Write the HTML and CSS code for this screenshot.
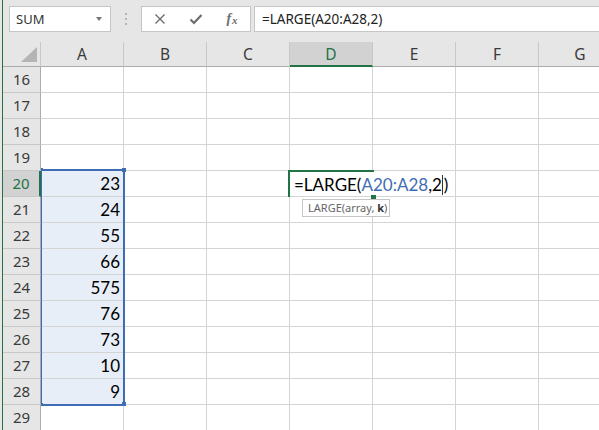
FILE: index.html
```html
<!DOCTYPE html>
<html>
<head>
<meta charset="utf-8">
<link rel="stylesheet" href="styles.css">
</head>
<body>
<div class="app">
  <div class="edge"></div>
  <div class="main">
    <div class="toolbar">
      <div class="namebox"><span>SUM</span><span class="caret"></span></div>
      <div class="dots"><svg width="4" height="14" viewBox="0 0 4 14"><rect x="1" y="1" width="2" height="2" fill="#b4b4b4"/><rect x="1" y="6" width="2" height="2" fill="#b4b4b4"/><rect x="1" y="11" width="2" height="2" fill="#b4b4b4"/></svg></div>
      <div class="fnbox">
        <span class="fbtn"><svg width="12" height="12" viewBox="0 0 12 12"><path d="M1.5 1.5 L10.5 10.5 M10.5 1.5 L1.5 10.5" stroke="#6d6d6d" stroke-width="1.4" fill="none"/></svg></span>
        <span class="fbtn"><svg width="14" height="12" viewBox="0 0 14 12"><path d="M1.5 6.5 L5 10 L12.5 2" stroke="#6d6d6d" stroke-width="2.2" fill="none"/></svg></span>
        <span class="fbtn fx"><i>f</i><i class="x">x</i></span>
      </div>
      <div class="formula">=LARGE(A20:A28,2)</div>
    </div>
    <div class="sheet">
      <div class="grid">
        <div class="corner"><svg width="37" height="24" viewBox="0 0 37 24"><polygon points="34,5 34,20 18,20" fill="#b4b4b4"/></svg></div>
        <div class="ch">A</div><div class="ch">B</div><div class="ch">C</div><div class="ch sel">D</div><div class="ch">E</div><div class="ch">F</div><div class="ch">G</div>

        <div class="rh">16</div><div class="c"></div><div class="c"></div><div class="c"></div><div class="c"></div><div class="c"></div><div class="c"></div><div class="c"></div>
        <div class="rh">17</div><div class="c"></div><div class="c"></div><div class="c"></div><div class="c"></div><div class="c"></div><div class="c"></div><div class="c"></div>
        <div class="rh">18</div><div class="c"></div><div class="c"></div><div class="c"></div><div class="c"></div><div class="c"></div><div class="c"></div><div class="c"></div>
        <div class="rh">19</div><div class="c"></div><div class="c"></div><div class="c"></div><div class="c"></div><div class="c"></div><div class="c"></div><div class="c"></div>
        <div class="rh sel">20</div><div class="c s">23</div><div class="c"></div><div class="c"></div><div class="c"></div><div class="c"></div><div class="c"></div><div class="c"></div>
        <div class="rh">21</div><div class="c s">24</div><div class="c"></div><div class="c"></div><div class="c"></div><div class="c"></div><div class="c"></div><div class="c"></div>
        <div class="rh">22</div><div class="c s">55</div><div class="c"></div><div class="c"></div><div class="c"></div><div class="c"></div><div class="c"></div><div class="c"></div>
        <div class="rh">23</div><div class="c s">66</div><div class="c"></div><div class="c"></div><div class="c"></div><div class="c"></div><div class="c"></div><div class="c"></div>
        <div class="rh">24</div><div class="c s">575</div><div class="c"></div><div class="c"></div><div class="c"></div><div class="c"></div><div class="c"></div><div class="c"></div>
        <div class="rh">25</div><div class="c s">76</div><div class="c"></div><div class="c"></div><div class="c"></div><div class="c"></div><div class="c"></div><div class="c"></div>
        <div class="rh">26</div><div class="c s">73</div><div class="c"></div><div class="c"></div><div class="c"></div><div class="c"></div><div class="c"></div><div class="c"></div>
        <div class="rh">27</div><div class="c s">10</div><div class="c"></div><div class="c"></div><div class="c"></div><div class="c"></div><div class="c"></div><div class="c"></div>
        <div class="rh">28</div><div class="c s">9</div><div class="c"></div><div class="c"></div><div class="c"></div><div class="c"></div><div class="c"></div><div class="c"></div>
        <div class="rh">29</div><div class="c"></div><div class="c"></div><div class="c"></div><div class="c"></div><div class="c"></div><div class="c"></div><div class="c"></div>
      </div>

      <div class="selbox"></div>
      <div class="hdl h-tl"></div>
      <div class="hdl h-tr"></div>
      <div class="hdl h-bl"></div>
      <div class="hdl h-br"></div>

      <div class="editor">=LARGE(<span class="ref">A20:A28</span>,2<span class="cursor"></span>)</div>
      <div class="active"></div>
      <div class="ahdl"></div>
      <div class="tip">LARGE(array, <b>k</b>)</div>
    </div>
  </div>
</div>
</body>
</html>
```

FILE: styles.css
```css
* { box-sizing: border-box; }

body {
  margin: 0;
  width: 599px;
  height: 430px;
  overflow: hidden;
  background: #e6e6e6;
  font-family: "Noto Sans", "DejaVu Sans", sans-serif;
}

.app {
  display: flex;
  height: 430px;
}

.edge {
  width: 2px;
  flex: none;
}

.main {
  flex: 1;
  min-width: 0;
  border-left: 1px solid #217346;
  display: flex;
  flex-direction: column;
}

.toolbar {
  height: 42px;
  flex: none;
  display: flex;
  align-items: flex-start;
  padding-top: 6px;
}

.namebox {
  margin-left: 6px;
  width: 102px;
  height: 26px;
  background: #fff;
  border: 1px solid #c6c6c6;
  display: flex;
  align-items: center;
  padding-left: 6px;
  font-size: 13px;
  color: #333;
}

.caret {
  margin-left: auto;
  margin-right: 8px;
  width: 0;
  height: 0;
  border-left: 3.5px solid transparent;
  border-right: 3.5px solid transparent;
  border-top: 4px solid #777;
}

.dots {
  width: 30px;
  height: 26px;
  display: flex;
  align-items: center;
  justify-content: center;
}

.dots svg { display: block; }

.fnbox {
  width: 110px;
  height: 26px;
  background: #fff;
  border: 1px solid #c6c6c6;
  display: flex;
  align-items: center;
  padding-left: 0;
}

.fbtn {
  width: 36px;
  height: 24px;
  display: flex;
  align-items: center;
  justify-content: center;
}

.fbtn svg { display: block; }

.fx {
  font-family: "Liberation Serif", serif;
  font-size: 14px;
  color: #6d6d6d;
  font-weight: bold;
}

.fx .x {
  font-size: 11px;
  margin-left: 1px;
  position: relative;
  top: 1px;
}

.formula {
  flex: 1;
  margin-left: 3px;
  margin-right: -2px;
  height: 26px;
  background: #fff;
  border: 1px solid #c6c6c6;
  padding-left: 7px;
  font-size: 13.5px;
  line-height: 24px;
  color: #222;
  white-space: nowrap;
}

.sheet {
  flex: 1;
  position: relative;
  overflow: hidden;
  background: #fff;
}

.grid {
  display: grid;
  grid-template-columns: 38px repeat(7, 83px);
  grid-template-rows: 25px repeat(14, 26px);
}

.corner {
  background: #e6e6e6;
  border-right: 1px solid #c8c8c8;
  border-bottom: 1px solid #ababab;
}

.corner svg { display: block; }

.ch {
  background: #e6e6e6;
  border-right: 1px solid #c8c8c8;
  border-bottom: 1px solid #ababab;
  text-align: center;
  font-size: 15.5px;
  line-height: 24px;
  color: #3a3a3a;
}

.ch.sel {
  background: #d2d2d2;
  color: #217346;
  border-bottom: 2px solid #217346;
}

.rh {
  background: #e6e6e6;
  border-right: 1px solid #ababab;
  border-bottom: 1px solid #c8c8c8;
  text-align: center;
  font-size: 15px;
  line-height: 25px;
  color: #3a3a3a;
}

.rh.sel {
  background: #d2d2d2;
  color: #217346;
  border-right: 2px solid #217346;
}

.c {
  border-right: 1px solid #d4d4d4;
  border-bottom: 1px solid #d4d4d4;
  text-align: right;
  padding-right: 3px;
  font-family: Lato, "Noto Sans", sans-serif;
  font-size: 17px;
  line-height: 26px;
  color: #000;
}

.c.s { background: #e7eef8; }

.selbox {
  position: absolute;
  left: 38px;
  top: 127px;
  width: 84px;
  height: 237px;
  border: 2px solid #3f6db3;
  border-left-width: 1px;
}

.hdl {
  position: absolute;
  background: #3f6db3;
}

.h-tl { left: 38px; top: 126px; width: 2px; height: 3px; }
.h-tr { left: 119px; top: 126px; width: 4px; height: 4px; }
.h-bl { left: 38px; top: 361px; width: 2px; height: 3px; }
.h-br { left: 119px; top: 360px; width: 4px; height: 4px; }

.editor {
  position: absolute;
  left: 287px;
  top: 129px;
  width: 158px;
  height: 25px;
  background: #fff;
  padding-left: 4px;
  font-family: Lato, "Noto Sans", sans-serif;
  font-size: 17px;
  line-height: 27px;
  color: #000;
  white-space: nowrap;
}

.ref { color: #3f6db3; }

.cursor {
  display: inline-block;
  width: 1px;
  height: 20px;
  background: #333;
  vertical-align: -4px;
  margin: 0 1px 0 0;
}

.active {
  position: absolute;
  left: 285px;
  top: 128px;
  width: 86px;
  height: 27px;
  border-top: 2px solid #217346;
  border-left: 2px solid #217346;
}

.ahdl {
  position: absolute;
  left: 368px;
  top: 153px;
  width: 5px;
  height: 4px;
  background: #217346;
}

.tip {
  position: absolute;
  left: 299px;
  top: 157px;
  width: 88px;
  height: 18px;
  background: #fff;
  border: 1px solid #c6c6c6;
  padding-left: 5px;
  font-size: 11px;
  line-height: 16px;
  color: #666;
  white-space: nowrap;
}

.tip b { color: #333; }
```
